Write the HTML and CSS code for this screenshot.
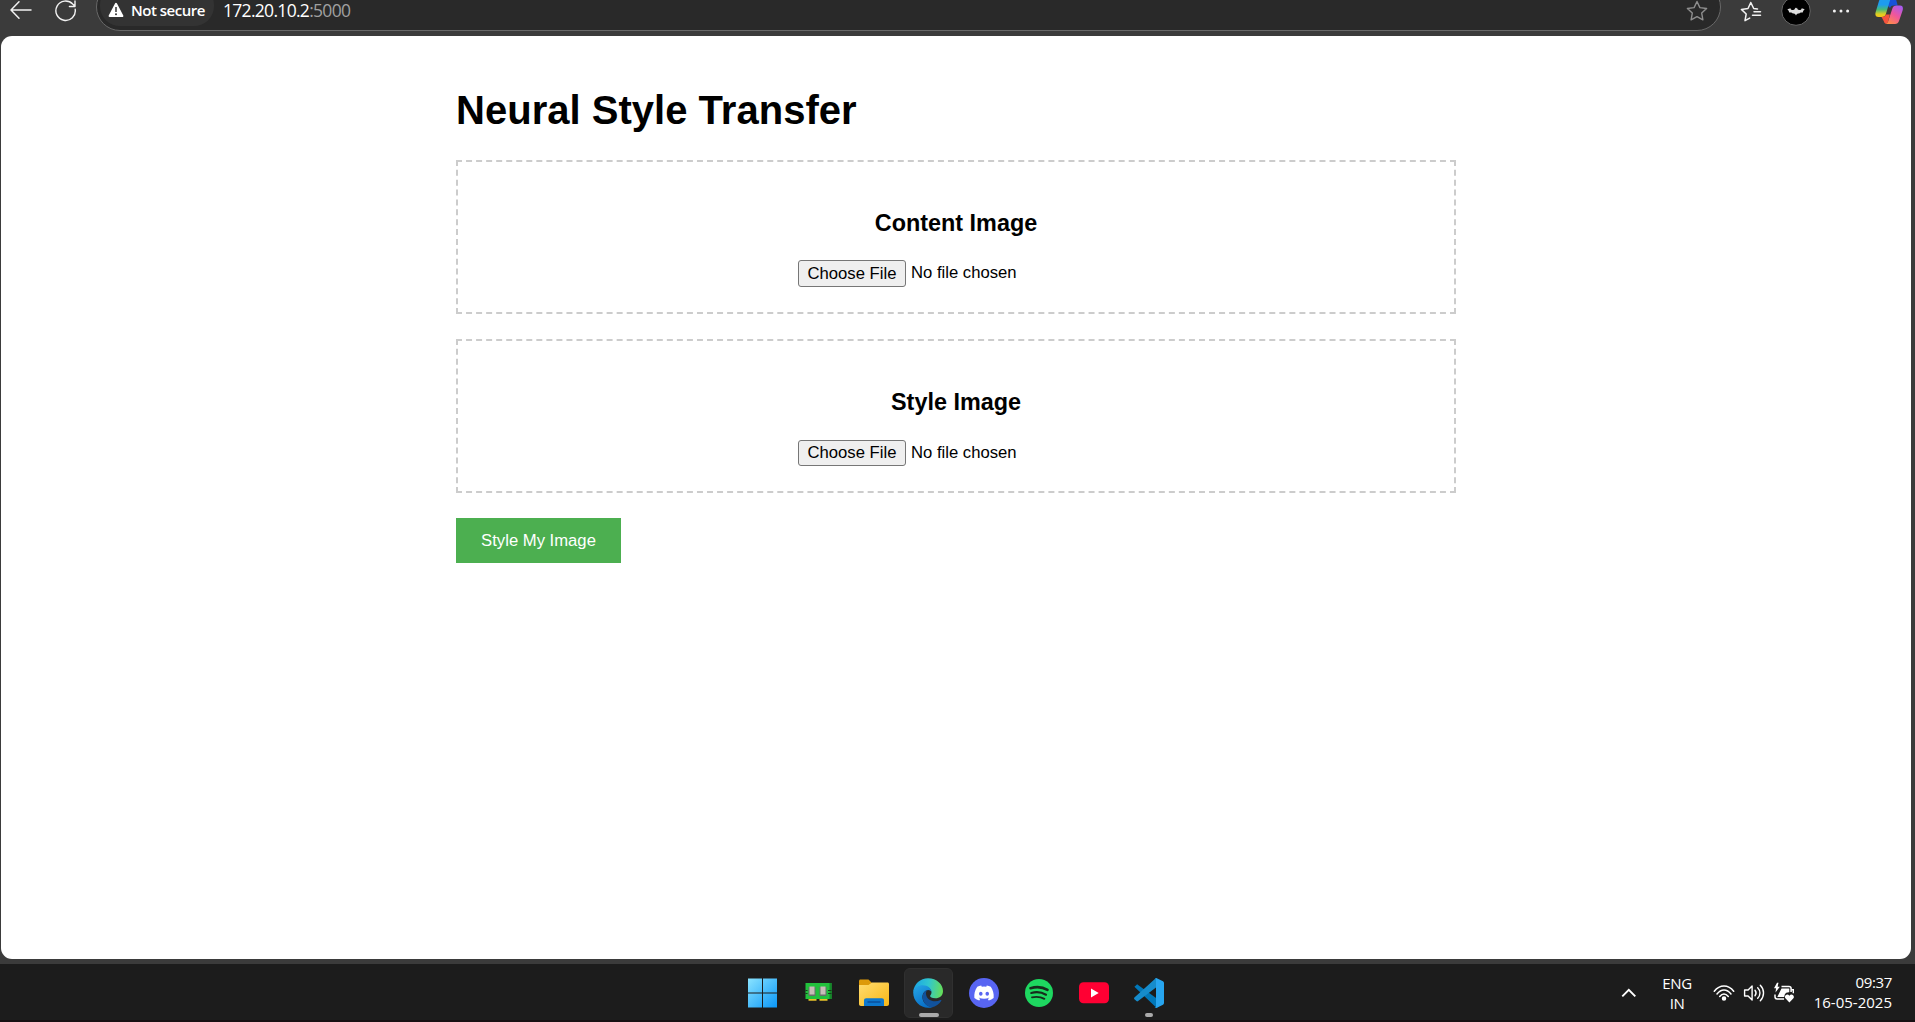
FILE: index.html
```html
<!DOCTYPE html>
<html lang="en">
<head>
<meta charset="utf-8">
<title>Neural Style Transfer</title>
<link rel="stylesheet" href="styles.css">
</head>
<body>
<header class="toolbar">
  <svg class="back" width="24" height="24" viewBox="0 0 24 24" fill="none" stroke="#f2f2f2" stroke-width="1.5" stroke-linecap="round" stroke-linejoin="round"><path d="M22 12H2.5M10 3.8 2 12l8 8.2"/></svg>
  <svg class="reload" width="24" height="24" viewBox="0 0 24 24" fill="none" stroke="#f2f2f2" stroke-width="1.4" stroke-linecap="round" stroke-linejoin="round"><path d="M21.2 10.3a9.7 9.7 0 1 1-2.500-5.200L21 7.300M21 2v5.500h-5.600"/></svg>
  <div class="address">
    <div class="security">
      <svg width="16" height="16" viewBox="0 0 16 16"><path d="M8 1.800 14.400 14H1.600Z" fill="#fff" stroke="#fff" stroke-width="2" stroke-linejoin="round"/><path d="M8 5v5" stroke="#333" stroke-width="1.500"/><circle cx="8" cy="12.200" r="1" fill="#333"/></svg>
      <span class="security-text">Not secure</span>
    </div>
    <span class="url">172.20.10.2<span class="port">:5000</span></span>
    <svg class="star" width="22" height="22" viewBox="0 0 22 22" fill="none" stroke="#8e8e8e" stroke-width="1.400" stroke-linejoin="round"><path d="m11 1.500 2.900 6.100 6.700.9-4.900 4.600 1.200 6.700L11 16.600l-5.900 3.200 1.200-6.700L1.400 8.500l6.700-.9Z"/></svg>
  </div>
  <svg class="favorites" width="22" height="22" viewBox="0 0 22 22" fill="none" stroke="#f2f2f2" stroke-width="1.500" stroke-linejoin="round" stroke-linecap="round"><path d="M17.500 7.900 13.700 7.500 10.800 1.500 8 7.500l-6.600.9 4.800 4.600L5 19.700l4.700-2.600M14 10.800h6.500M12.500 14.300h8"/></svg>
  <svg class="profile" width="30" height="30" viewBox="0 0 30 30"><circle cx="15" cy="15" r="14.300" fill="#000" stroke="#666"/><path d="M6.500 13.300 9.500 12.200c0 1.300 1.200 2 2.500 1.800.8-.1 1.400-.5 1.800-1l.4-1.400.5.700h.8l.5-.7.4 1.400c.4.500 1 .9 1.800 1 1.300.2 2.500-.5 2.500-1.800l3 1.100c-1.100 1-1.800 2.200-2 3.300-1.600-.4-2.800.1-3.400.9-1.400-.2-2.600.300-3.300 1.900-.7-1.600-1.900-2.100-3.300-1.900-.6-.8-1.800-1.300-3.400-.9-.2-1.100-.9-2.300-2-3.300Z" fill="#ddd"/></svg>
  <svg class="more" width="18" height="6" viewBox="0 0 18 6" fill="#f2f2f2"><circle cx="2.400" cy="3" r="1.500"/><circle cx="9" cy="3" r="1.500"/><circle cx="15.600" cy="3" r="1.500"/></svg>
  <svg class="copilot" width="28" height="28" viewBox="0 0 28 28">
    <defs>
      <linearGradient id="cpA" x1="0" y1="0" x2="0" y2="1"><stop offset="0" stop-color="#1d9cf0"/><stop offset=".35" stop-color="#1d9cf0"/><stop offset=".6" stop-color="#45ba7a"/><stop offset=".85" stop-color="#e0cf20"/><stop offset="1" stop-color="#f8c51b"/></linearGradient>
      <linearGradient id="cpB" x1=".8" y1="0" x2=".2" y2="1"><stop offset="0" stop-color="#a75bf0"/><stop offset=".5" stop-color="#f0569b"/><stop offset="1" stop-color="#ff8c48"/></linearGradient>
    </defs>
    <path d="M13 1h5.500c2 0 2.600 1.500 3 3l1.200 4.500h-4.200c-1.800 0-2.800.8-3.500 2.500L13 9Z" fill="#1752d8"/>
    <path d="M8 1h9c-1.800.8-2.200 3-2.800 5l-3.300 11c-.8 2.300-1.900 3-3.900 3H3.500C.5 20-.1 17.500.7 15L4 4c.7-2 1.900-3 4-3Z" fill="url(#cpA)"/>
    <path d="M6.500 20c2.200 0 3.600-.7 4.400-2.500h4L13.200 24c-.4 1.500-.9 2.600-2 3-1.500-.2-2-1.300-2.500-2.900Z" fill="#f5533d"/>
    <path d="M20 27h-9c1.800-.8 2.200-2.500 2.700-4.500l3.500-10.500c.8-2.600 2-3.500 4.500-3.500H25c3 0 3.300 2.500 2.600 5L24 24c-.7 2-1.900 3-4 3Z" fill="url(#cpB)"/>
  </svg>
</header>

<main class="page">
  <div class="container">
    <h1>Neural Style Transfer</h1>
    <section class="upload">
      <h3>Content Image</h3>
      <div class="file"><button class="choose" type="button">Choose File</button><span class="filename">No file chosen</span></div>
    </section>
    <section class="upload">
      <h3>Style Image</h3>
      <div class="file style-file"><button class="choose" type="button">Choose File</button><span class="filename">No file chosen</span></div>
    </section>
    <button class="submit" type="button">Style My Image</button>
  </div>
</main>

<footer class="taskbar">
  <nav class="apps">
    <div class="app"><svg width="30" height="30" viewBox="0 0 30 30"><defs><linearGradient id="win" x1="0" y1="0" x2="30" y2="30" gradientUnits="userSpaceOnUse"><stop offset="0" stop-color="#8be4ff"/><stop offset="1" stop-color="#0795f8"/></linearGradient></defs><path d="M0 .500h14v14H0ZM15 .500h14v14H15ZM0 15.500h14v14H0ZM15 15.500h14v14H15Z" fill="url(#win)"/></svg></div>
    <div class="app"><svg width="30" height="30" viewBox="0 0 30 30"><path d="M2.500 5h26v16h-26Z" fill="#21c13c"/><path d="M26.500 5h2v16h-2Z" fill="#148828"/><path d="M2.500 12h2v1h-2ZM2.500 15h2v1h-2ZM25 12h3.500v1H25ZM25 15h3.500v1H25Z" fill="#153d1b"/><path d="M5.500 21h8v1.700h-8ZM16.500 21h8v1.700h-8Z" fill="#e6c22a"/><path d="M5.500 9h7v9h-7ZM16.500 9h7v9h-7Z" fill="#68706a"/><path d="M6.500 8.500h5v8h-5ZM17.500 8.500h5v8h-5Z" fill="#c8bdb8"/></svg></div>
    <div class="app"><svg width="32" height="30" viewBox="0 0 32 30"><defs><linearGradient id="fold" x1="0" y1="0" x2="1" y2="1"><stop offset="0" stop-color="#ffdc70"/><stop offset="1" stop-color="#f7b716"/></linearGradient></defs><path d="M2 3c0-.8.600-1.500 1.500-1.500h8L15 5v5H2Z" fill="#dd9a0a"/><path d="M2 7h9.500L15 4.500h15.500c.9 0 1.500.7 1.500 1.500v20c0 1.200-.8 2-2 2H4c-1.200 0-2-.8-2-2Z" fill="url(#fold)"/><path d="M7 28v-5.500c0-1.300.9-2.200 2.200-2.200h15.600c1.300 0 2.200.9 2.200 2.200V28Z" fill="#0d78cd"/><path d="M10.500 24h13" stroke="#084a95" stroke-width="1.300"/></svg></div>
    <div class="app active"><svg width="30" height="30" viewBox="0 0 30 30">
      <defs><linearGradient id="edgeTop" x1="0" y1=".4" x2="1" y2=".5"><stop offset="0" stop-color="#1aa5e6"/><stop offset=".5" stop-color="#31c6cf"/><stop offset="1" stop-color="#66de58"/></linearGradient><linearGradient id="edgeSide" x1="0" y1="0" x2=".5" y2="1"><stop offset="0" stop-color="#27a7e6"/><stop offset="1" stop-color="#0870c9"/></linearGradient></defs>
      <path d="M.2 14C1 5.800 7.300.2 15.100.2 23.800.2 30 6.400 30 13c0 4.800-3.500 7.300-7.600 7.300-3.700 0-5.300-1.200-5.300-2.200 0-1 1.400-1.500 1.400-3.900 0-3.600-4.200-6.300-8.700-6.300C5.300 7.900 2 10.300.2 14Z" fill="url(#edgeTop)"/>
      <path d="M.2 14C1.500 9.500 5.400 7.300 9.800 7.300c5.200 0 8.700 3.300 8.700 6.900-.5-1.400-1.700-2.300-3.400-2.300-2.600 0-5.700 3-5.700 7.200 0 5 4.100 9.700 9.900 10.200C9.200 31.900 0 24.500.2 14Z" fill="url(#edgeSide)"/>
      <path d="M10 16.500c-2.100 6.600 4 12.900 9.400 12.700 3.900-1 7-3.200 8.900-6.500.3-.6-.3-.9-.8-.6-5.800 2.900-13.700.8-14.500-6-.2-1.700.4-3.200 1.600-4.200-1.900.2-3.900 2.300-4.600 4.600Z" fill="#11529c"/>
    </svg><i class="mark"></i></div>
    <div class="app"><svg width="30" height="30" viewBox="0 0 30 30"><circle cx="15" cy="15" r="15" fill="#5865f2"/><path transform="translate(5.300 5.300) scale(.81)" d="M20.317 4.370a19.791 19.791 0 0 0-4.885-1.515.074.074 0 0 0-.079.037c-.21.375-.444.864-.608 1.250a18.270 18.270 0 0 0-5.487 0 12.640 12.640 0 0 0-.617-1.250.077.077 0 0 0-.079-.037A19.736 19.736 0 0 0 3.677 4.370a.07.07 0 0 0-.032.027C.533 9.046-.32 13.580.099 18.057a.082.082 0 0 0 .031.057 19.900 19.900 0 0 0 5.993 3.030.078.078 0 0 0 .084-.028c.462-.63.874-1.295 1.226-1.994a.076.076 0 0 0-.041-.106 13.107 13.107 0 0 1-1.872-.892.077.077 0 0 1-.008-.128c.126-.094.252-.192.372-.292a.074.074 0 0 1 .077-.01c3.928 1.793 8.180 1.793 12.062 0a.074.074 0 0 1 .078.01c.12.098.246.198.373.292a.077.077 0 0 1-.006.127c-.598.35-1.220.645-1.873.892a.077.077 0 0 0-.041.107c.36.698.772 1.362 1.225 1.993a.076.076 0 0 0 .084.028 19.839 19.839 0 0 0 6.002-3.030.077.077 0 0 0 .032-.054c.5-5.177-.838-9.674-3.549-13.660a.061.061 0 0 0-.031-.03ZM8.020 15.330c-1.183 0-2.157-1.085-2.157-2.419 0-1.333.955-2.419 2.157-2.419 1.210 0 2.176 1.095 2.157 2.420 0 1.333-.956 2.418-2.157 2.418Zm7.975 0c-1.183 0-2.157-1.085-2.157-2.419 0-1.333.955-2.419 2.157-2.419 1.210 0 2.176 1.095 2.157 2.420 0 1.333-.946 2.418-2.157 2.418Z" fill="#fff"/></svg></div>
    <div class="app"><svg width="28" height="28" viewBox="0 0 28 28"><circle cx="14" cy="14" r="14" fill="#1ed760"/><g fill="none" stroke="#172b1c" stroke-linecap="round"><path d="M5.500 9.200c5.500-1.600 12.500-1 17 1.700" stroke-width="2.600"/><path d="M6.300 14c4.800-1.300 10.600-.7 14.700 1.700" stroke-width="2.200"/><path d="M7 18.300c4.300-.9 8.800-.5 12.400 1.600" stroke-width="1.800"/></g></svg></div>
    <div class="app"><svg width="30" height="30" viewBox="0 0 30 30"><rect y="4.300" width="30" height="21" rx="4.500" fill="#ff0033"/><path d="M12 10.500v9l7.700-4.500Z" fill="#fff"/></svg></div>
    <div class="app code"><svg width="30" height="30" viewBox="0 0 30 30"><path d="m.4 8.700 2-1.800c.5-.4 1.200-.4 1.700 0L29 25l-6.300 5Z" fill="#0077b9"/><path d="m.4 21.300 2 1.800c.5.400 1.200.4 1.700 0L22 9.500V0L.400 19.400c-.5.500-.5 1.400 0 1.900Z" fill="#168ccc"/><path d="M22.300.1 29 3.300c.6.300 1 .9 1 1.600v20.200c0 .7-.4 1.300-1 1.600l-6.700 3.200c-.7.300-1.300.1-1.800-.4.700.4 1.500 0 1.500-.9V1.400c0-.9-.8-1.300-1.500-.9.500-.500 1.100-.700 1.800-.400Z" fill="#27a5ef"/></svg><i class="mark small"></i></div>
  </nav>
  <div class="tray">
    <svg class="chevron" width="16" height="10" viewBox="0 0 16 10" fill="none" stroke="#fff" stroke-width="1.900"><path d="m1.300 8.300 6.500-6.500 6.500 6.500"/></svg>
    <div class="language">ENG<br>IN</div>
    <svg class="wifi" width="22" height="18" viewBox="0 0 22 18" fill="none" stroke="#fff" stroke-width="1.500" stroke-linecap="round"><path d="M1.300 7.300C6.700.3 15.300.3 20.700 7.300M4 10C8.200 4.600 13.800 4.600 18 10M6.700 12.500c2.700-3.300 5.900-3.300 8.600 0"/><circle cx="11" cy="14.600" r="1.500" fill="#fff"/></svg>
    <svg class="volume" width="22" height="20" viewBox="0 0 22 20" fill="none" stroke="#fff" stroke-width="1.400" stroke-linecap="round" stroke-linejoin="round"><path d="M1.600 7v6h3.500l4 4V3l-4 4ZM12 7.200c1.300 1.700 1.300 3.900 0 5.600M14.700 4.700c3 3.100 3 7.500 0 10.600M17.300 2.300c4.300 4.300 4.300 11.100 0 15.400"/></svg>
    <svg class="battery" width="22" height="22" viewBox="0 0 22 22"><path d="M8.500 4.500h7.500c1.300 0 2.100.8 2.100 2.100V10M2 12.500v2.300c0 1.300.8 2.100 2.100 2.100h7" fill="none" stroke="#fff" stroke-width="1.500"/><path d="M8.500 6.500h7.800v3.700c-2.200-.1-4 .7-4.600 2.500l-.5 2.300H4.300Z" fill="#fff"/><path d="M4 .8 1 6.300h2L2.500 10.500l4.300-5.700H4.600L5.500.8Z" fill="#fff"/><path d="M18.300 7.800h2v3.500" stroke="#fff" stroke-width="1.400" fill="none"/><path d="m16.400 20.500-4-4.200c-1.800-2.600 2-5.400 4-2.600 2-2.800 5.800 0 4 2.600Z" fill="#fff"/></svg>
    <div class="clock">09:37<br><span class="date">16-05-2025</span></div>
  </div>
</footer>
</body>
</html>
```
FILE: styles.css
```css
* { box-sizing: border-box; }
body {
  margin: 0;
  width: 1915px;
  height: 1022px;
  overflow: hidden;
  background: #3b3b3b;
  font-family: "Liberation Sans", Arial, sans-serif;
  display: flex;
  flex-direction: column;
}
svg { display: block; flex: none; }

.toolbar {
  height: 36px;
  flex: none;
  display: flex;
  align-items: flex-start;
  font-family: "Open Sans", "Noto Sans", sans-serif;
}
.back { margin: -2px 0 0 9px; }
.reload { margin: -1px 0 0 21px; }
.address {
  width: 1625px;
  height: 48px;
  margin: -17px 0 0 18px;
  padding: 16px 12px 0 3px;
  border: 1.5px solid #686868;
  border-radius: 24px;
  background: #292929;
  display: flex;
  align-items: flex-start;
}
.security {
  width: 114px;
  height: 41px;
  margin-top: -15px;
  padding: 17px 0 0 8px;
  border-radius: 20px;
  background: #333;
  display: flex;
  gap: 7px;
}
.security-text {
  color: #fff;
  font-weight: 600;
  font-size: 15px;
  line-height: 20px;
  letter-spacing: -.5px;
  margin-top: -2px;
  white-space: nowrap;
}
.url { margin: -1px 0 0 9px; color: #fff; font-size: 17.5px; line-height: 22px; letter-spacing: -.7px; }
.port { color: #a0a0a0; }
.star { margin-left: auto; }
.favorites { margin: 1px 0 0 19px; }
.profile { margin: -4px 0 0 19px; }
.more { margin: 8px 0 0 21px; }
.copilot { margin: -3px 0 0 25px; }

.page {
  width: 1910px;
  height: 923px;
  flex: none;
  margin-left: 1px;
  border-radius: 11px;
  background: #fff;
  color: #000;
}
.container { width: 1000px; margin: 0 auto; padding-top: 51px; }
h1 { margin: 0 0 27px; font-size: 40px; line-height: 46px; letter-spacing: .02px; }
.upload {
  height: 154px;
  margin-bottom: 25px;
  padding-top: 48px;
  border: 2px dashed #ccc;
  text-align: center;
}
h3 { margin: 0 0 23px; font-size: 23.4px; line-height: 27px; }
.file { display: flex; align-items: center; width: 316px; margin: 0 auto; }
.choose {
  width: 108px;
  height: 27px;
  padding: 0;
  border: 1px solid #767676;
  border-radius: 3px;
  background: #efefef;
  color: #000;
  font: 16.67px "Liberation Sans", Arial, sans-serif;
}
.filename { margin: -2px 0 0 5px; font-size: 16.67px; line-height: 20px; }
.style-file .choose { height: 26px; margin-top: 1px; }
.style-file .filename { margin-top: 0; }
.submit {
  display: block;
  width: 165px;
  height: 45px;
  padding: 0;
  border: 0;
  background: #4caf50;
  color: #fff;
  font: 16.67px "Liberation Sans", Arial, sans-serif;
}

.taskbar {
  height: 58px;
  flex: none;
  margin-top: 5px;
  padding-left: 738px;
  background: #1c1c1c;
  border-bottom: 2px solid #160f12;
  display: flex;
  color: #fff;
  font: 15px/20px "Open Sans", "Noto Sans", sans-serif;
}
.apps { display: flex; gap: 6.3px; padding-top: 4px; }
.app {
  width: 49px;
  height: 50px;
  border-radius: 6px;
  border: 1px solid transparent;
  display: flex;
  align-items: center;
  justify-content: center;
  position: relative;
}
.active { background: #292929; border-color: #303030; }
.code { margin-left: -1px; }
.mark { position: absolute; bottom: 0; left: 14px; width: 20px; height: 4px; border-radius: 2px; background: #aaa; }
.small { left: 20px; width: 8px; }
.tray { flex: 1; display: flex; align-items: flex-start; padding-right: 23px; }
.chevron { margin: 24px 0 0 auto; }
.language { width: 34px; margin: 9px 0 0 23px; text-align: center; letter-spacing: -.4px; }
.wifi { margin: 20px 0 0 19px; }
.volume { margin: 19px 0 0 8px; }
.battery { margin: 18px 0 0 8px; }
.clock { width: 80px; margin: 8px 0 0 17px; text-align: right; letter-spacing: -.35px; white-space: nowrap; }
.date { letter-spacing: 0; }
```
